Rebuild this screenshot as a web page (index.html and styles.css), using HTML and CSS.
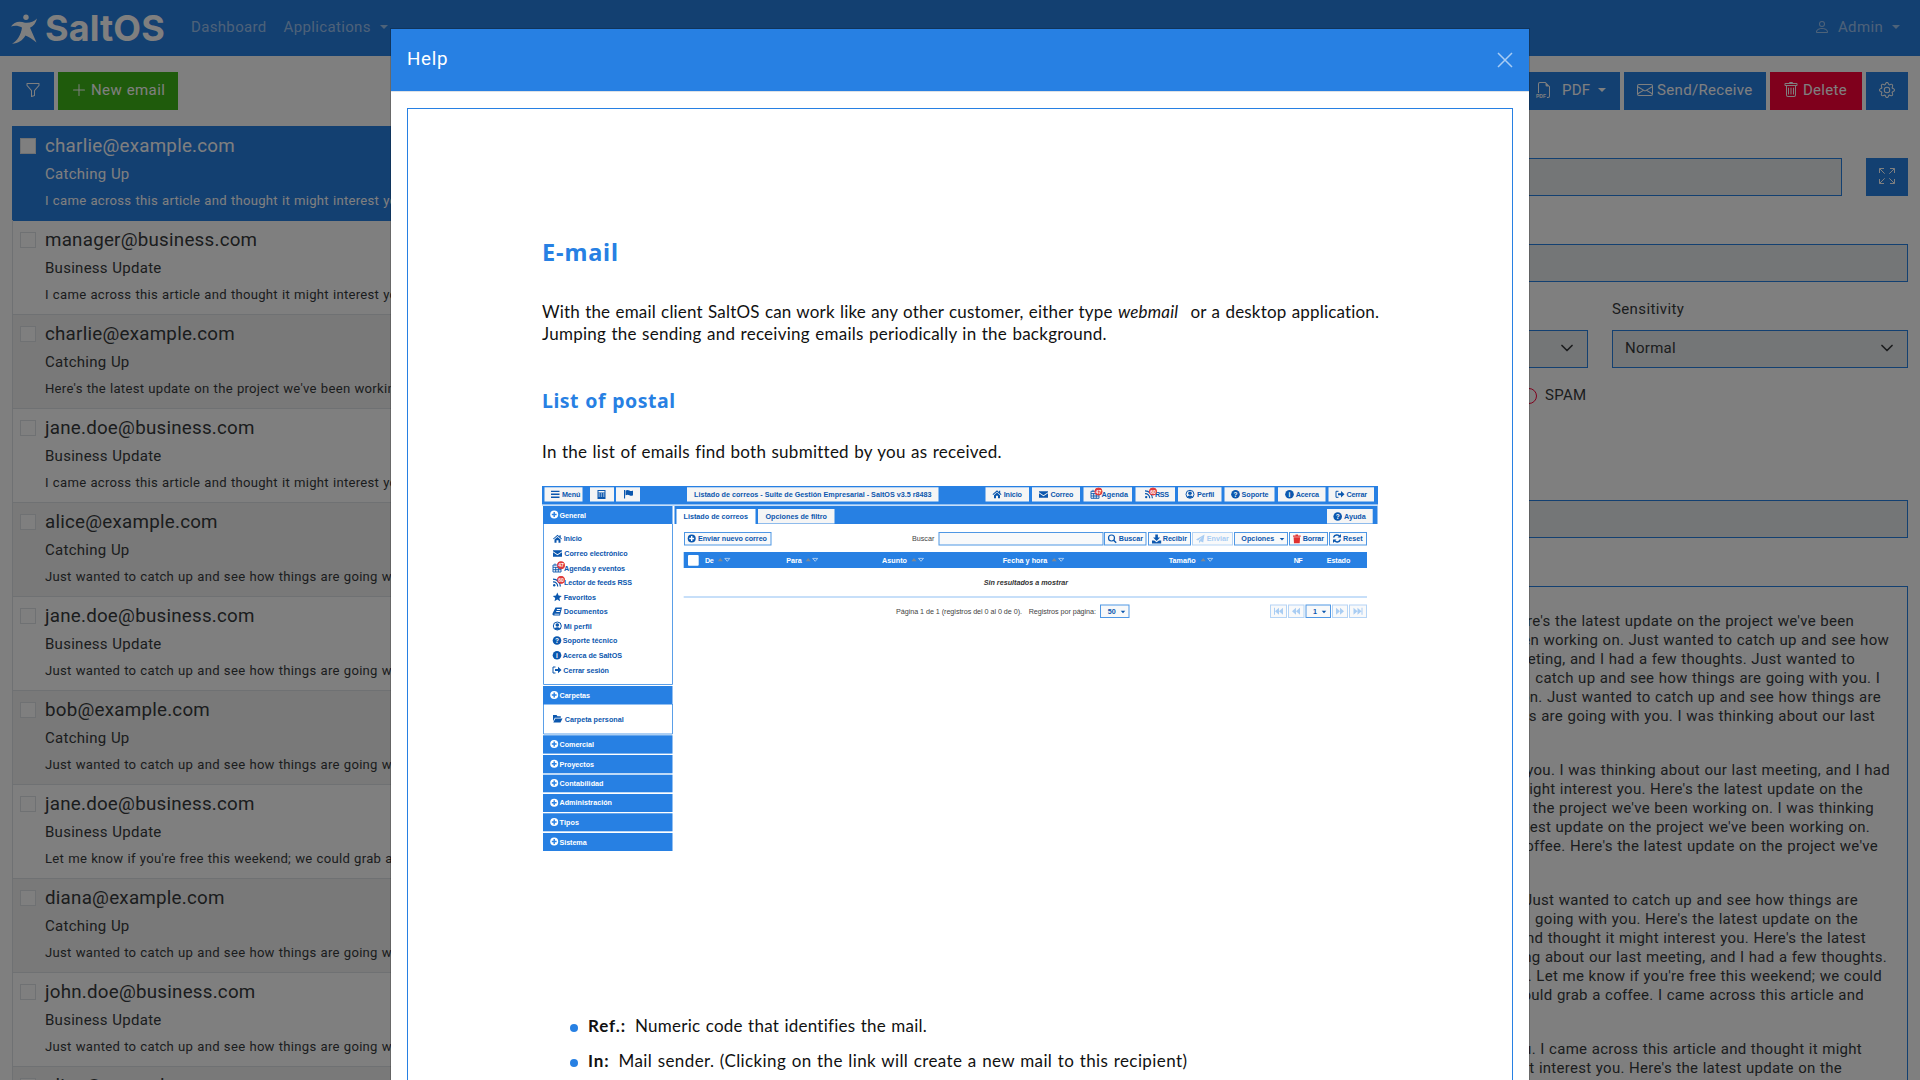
FILE: index.html
```html
<!DOCTYPE html>
<html lang="en">
<head>
<meta charset="utf-8">
<title>SaltOS</title>
<link rel="stylesheet" href="styles.css">
</head>
<body>
<nav class="navbar">
  <div class="brand">
    <svg class="brand-mark" width="28" height="32" viewBox="11 12 28 32"><circle cx="27" cy="16.3" r="2.7"/><path d="M12 25.5c3-4.600 8-6 14-3.700 5 .4 8.500-.8 12-4.300-1 4.500-3.500 7.500-7 9.300l6.500 14.700c-4-3.200-7.500-5.500-11-7-3 4.800-7 8-13.500 8.300 5.500-3.200 9-8.800 10-16.300-3.500-1.800-7-2.200-11-1z"/></svg>
    <span class="brand-name">SaltOS</span>
  </div>
  <div class="nav-links">
    <a>Dashboard</a>
    <a>Applications<i class="caret"></i></a>
  </div>
  <div class="nav-user">
    <svg class="icon" viewBox="0 0 16 16"><path d="M8 8a3 3 0 1 0 0-6 3 3 0 0 0 0 6m2-3a2 2 0 1 1-4 0 2 2 0 0 1 4 0m4 8c0 1-1 1-1 1H3s-1 0-1-1 1-4 6-4 6 3 6 4m-1-.004c-.001-.246-.154-.986-.832-1.664C11.516 10.680 10.289 10 8 10s-3.516.68-4.168 1.332c-.678.678-.83 1.418-.832 1.664z"/></svg>
    <span>Admin</span><i class="caret"></i>
  </div>
</nav>

<main class="layout">
  <section class="list-pane">
    <div class="toolbar">
      <button class="btn btn-icon"><svg class="icon" viewBox="0 0 16 16"><path d="M1.500 1.500A.5.5 0 0 1 2 1h12a.5.5 0 0 1 .5.5v2a.5.5 0 0 1-.128.334L10 8.692V13.500a.5.5 0 0 1-.342.474l-3 1A.5.5 0 0 1 6 14.500V8.692L1.628 3.834A.5.5 0 0 1 1.500 3.500zm1 .5v1.308l4.372 4.858A.5.5 0 0 1 7 8.500v5.306l2-.666V8.500a.5.5 0 0 1 .128-.334L13.500 3.308V2z"/></svg></button>
      <button class="btn btn-success"><svg class="icon" viewBox="0 0 16 16"><path d="M8 2a.5.5 0 0 1 .5.5v5h5a.5.5 0 0 1 0 1h-5v5a.5.5 0 0 1-1 0v-5h-5a.5.5 0 0 1 0-1h5v-5A.5.5 0 0 1 8 2"/></svg>New email</button>
    </div>
    <ul class="mails">
      <li class="mail active"><i class="check"></i><div><h5>charlie@example.com</h5><p>Catching Up</p><small>I came across this article and thought it might interest you.</small></div></li>
      <li class="mail"><i class="check"></i><div><h5>manager@business.com</h5><p>Business Update</p><small>I came across this article and thought it might interest you.</small></div></li>
      <li class="mail"><i class="check"></i><div><h5>charlie@example.com</h5><p>Catching Up</p><small>Here's the latest update on the project we've been working on.</small></div></li>
      <li class="mail"><i class="check"></i><div><h5>jane.doe@business.com</h5><p>Business Update</p><small>I came across this article and thought it might interest you.</small></div></li>
      <li class="mail"><i class="check"></i><div><h5>alice@example.com</h5><p>Catching Up</p><small>Just wanted to catch up and see how things are going with you.</small></div></li>
      <li class="mail"><i class="check"></i><div><h5>jane.doe@business.com</h5><p>Business Update</p><small>Just wanted to catch up and see how things are going with you.</small></div></li>
      <li class="mail"><i class="check"></i><div><h5>bob@example.com</h5><p>Catching Up</p><small>Just wanted to catch up and see how things are going with you.</small></div></li>
      <li class="mail"><i class="check"></i><div><h5>jane.doe@business.com</h5><p>Business Update</p><small>Let me know if you're free this weekend; we could grab a coffee.</small></div></li>
      <li class="mail"><i class="check"></i><div><h5>diana@example.com</h5><p>Catching Up</p><small>Just wanted to catch up and see how things are going with you.</small></div></li>
      <li class="mail"><i class="check"></i><div><h5>john.doe@business.com</h5><p>Business Update</p><small>Just wanted to catch up and see how things are going with you.</small></div></li>
      <li class="mail"><i class="check"></i><div><h5>alice@example.com</h5></div></li>
    </ul>
  </section>

  <section class="detail-pane">
    <div class="toolbar toolbar-end">
      <button class="btn btn-pdf"><svg class="icon" viewBox="0 0 16 16"><path d="M14 4.500V14a2 2 0 0 1-2 2h-1v-1h1a1 1 0 0 0 1-1V4.500h-2A1.500 1.500 0 0 1 9.500 3V1H4a1 1 0 0 0-1 1v9H2V2a2 2 0 0 1 2-2h5.500z"/><text class="pdf-tag" x="0" y="16" textLength="10" lengthAdjust="spacingAndGlyphs">PDF</text></svg><span>PDF</span><i class="caret"></i></button>
      <button class="btn btn-send"><svg class="icon" viewBox="0 0 16 16"><path d="M0 4a2 2 0 0 1 2-2h12a2 2 0 0 1 2 2v8a2 2 0 0 1-2 2H2a2 2 0 0 1-2-2zm2-1a1 1 0 0 0-1 1v.217l7 4.200 7-4.200V4a1 1 0 0 0-1-1zm13 2.383-4.708 2.825L15 11.105zm-.034 6.876-5.640-3.471L8 9.583l-1.326-.795-5.640 3.470A1 1 0 0 0 2 13h12a1 1 0 0 0 .966-.741M1 11.105l4.708-2.897L1 5.383z"/></svg>Send/Receive</button>
      <button class="btn btn-danger"><svg class="icon" viewBox="0 0 16 16"><path d="M5.500 5.500A.5.5 0 0 1 6 6v6a.5.5 0 0 1-1 0V6a.5.5 0 0 1 .5-.5m2.500 0a.5.5 0 0 1 .5.5v6a.5.5 0 0 1-1 0V6a.5.5 0 0 1 .5-.5m3 .5a.5.5 0 0 0-1 0v6a.5.5 0 0 0 1 0z"/><path d="M14.500 3a1 1 0 0 1-1 1H13v9a2 2 0 0 1-2 2H5a2 2 0 0 1-2-2V4h-.5a1 1 0 0 1-1-1V2a1 1 0 0 1 1-1H6a1 1 0 0 1 1-1h2a1 1 0 0 1 1 1h3.500a1 1 0 0 1 1 1zM4.118 4 4 4.059V13a1 1 0 0 0 1 1h6a1 1 0 0 0 1-1V4.059L11.882 4zM2.500 3h11V2h-11z"/></svg>Delete</button>
      <button class="btn btn-icon"><svg class="icon" viewBox="0 0 16 16"><path d="M8 4.754a3.246 3.246 0 1 0 0 6.492 3.246 3.246 0 0 0 0-6.492M5.754 8a2.246 2.246 0 1 1 4.492 0 2.246 2.246 0 0 1-4.492 0"/><path d="M9.796 1.343c-.527-1.790-3.065-1.790-3.592 0l-.094.319a.873.873 0 0 1-1.255.52l-.292-.16c-1.640-.892-3.433.902-2.540 2.541l.159.292a.873.873 0 0 1-.52 1.255l-.319.094c-1.790.527-1.790 3.065 0 3.592l.319.094a.873.873 0 0 1 .52 1.255l-.16.292c-.892 1.640.901 3.434 2.541 2.540l.292-.159a.873.873 0 0 1 1.255.52l.094.319c.527 1.790 3.065 1.790 3.592 0l.094-.319a.873.873 0 0 1 1.255-.52l.292.16c1.640.893 3.434-.902 2.540-2.541l-.159-.292a.873.873 0 0 1 .52-1.255l.319-.094c1.790-.527 1.790-3.065 0-3.592l-.319-.094a.873.873 0 0 1-.52-1.255l.16-.292c.893-1.640-.902-3.433-2.541-2.540l-.292.159a.873.873 0 0 1-1.255-.52zm-2.633.283c.246-.835 1.428-.835 1.674 0l.094.319a1.873 1.873 0 0 0 2.693 1.115l.291-.16c.764-.415 1.600.42 1.184 1.185l-.159.292a1.873 1.873 0 0 0 1.116 2.692l.318.094c.835.246.835 1.428 0 1.674l-.319.094a1.873 1.873 0 0 0-1.115 2.693l.16.291c.415.764-.42 1.600-1.185 1.184l-.291-.159a1.873 1.873 0 0 0-2.693 1.116l-.094.318c-.246.835-1.428.835-1.674 0l-.094-.319a1.873 1.873 0 0 0-2.692-1.115l-.292.16c-.764.415-1.600-.42-1.184-1.185l.159-.291A1.873 1.873 0 0 0 1.945 8.930l-.319-.094c-.835-.246-.835-1.428 0-1.674l.319-.094A1.873 1.873 0 0 0 3.060 4.377l-.16-.292c-.415-.764.42-1.600 1.185-1.184l.292.159a1.873 1.873 0 0 0 2.692-1.115z"/></svg></button>
    </div>
    <div class="field-row">
      <div class="input"></div>
      <button class="btn btn-icon"><svg class="icon icon-line" viewBox="0 0 16 16"><path d="M.5 5V.5H5M.7.7l5 5M11 .5h4.500V5M15.300.7l-5 5M.5 11v4.500H5M.7 15.300l5-5M15.500 11v4.500H11M15.300 15.300l-5-5"/></svg></button>
    </div>
    <div class="input input-gap"></div>
    <div class="select-row">
      <div></div><div></div>
      <div class="select"><svg width="16" height="16" viewBox="0 0 16 16"><path d="m2 5 6 6 6-6"/></svg></div>
      <div class="sensitivity"><label>Sensitivity</label><div class="select"><span>Normal</span><svg width="16" height="16" viewBox="0 0 16 16"><path d="m2 5 6 6 6-6"/></svg></div></div>
    </div>
    <div class="spam"><i class="radio"></i>SPAM</div>
    <div class="input input-attach"></div>
    <div class="message">
      <p>
        <span style="--end:54px">I came across this article and thought it might interest you. Here's the latest update on the project we've been</span>
        <span style="--end:19px">Here's the latest update on the project we've been working on. Just wanted to catch up and see how</span>
        <span style="--end:53px">I was thinking about our last meeting, and I had a few thoughts. Just wanted to</span>
        <span style="--end:28px">catch up and see how things are going with you. I</span>
        <span style="--end:27px">Here's the latest update on the project we've been working on. Just wanted to catch up and see how things are</span>
        <span style="--end:33px">Just wanted to catch up and see how things are going with you. I was thinking about our last</span>
      </p>
      <p>
        <span style="--end:18px">Just wanted to catch up and see how things are going with you. I was thinking about our last meeting, and I had</span>
        <span style="--end:45px">I came across this article and thought it might interest you. Here's the latest update on the</span>
        <span style="--end:34px">the project we've been working on. I was thinking</span>
        <span style="--end:38px">Here's the latest update on the project we've been working on.</span>
        <span style="--end:30px">we could grab a coffee. Here's the latest update on the project we've</span>
      </p>
      <p>
        <span style="--end:50px">Just wanted to catch up and see how things are</span>
        <span style="--end:50px">going with you. Here's the latest update on the</span>
        <span style="--end:42px">I came across this article and thought it might interest you. Here's the latest</span>
        <span style="--end:21px">I was thinking about our last meeting, and I had a few thoughts.</span>
        <span style="--end:26px">with you. Let me know if you're free this weekend; we could</span>
        <span style="--end:44px">we could grab a coffee. I came across this article and</span>
      </p>
      <p>
        <span style="--end:46px">with you. I came across this article and thought it might</span>
        <span style="--end:66px">thought it might interest you. Here's the latest update on the</span>
      </p>
    </div>
  </section>
</main>

<div class="backdrop"></div>

<div class="modal">
  <header class="modal-header">
    <h5>Help</h5>
    <svg width="16" height="16" viewBox="0 0 16 16"><path d="m1 1 14 14M15 1 1 15"/></svg>
  </header>
  <div class="modal-body">
    <article class="page">
      <h1>E-mail</h1>
      <p><span class="l1">With the email client SaltOS can work like any other customer, either type <em>webmail</em> <span class="tail">or a desktop application.</span></span><span class="l2">Jumping the sending and receiving emails periodically in the background.</span></p>
      <h2>List of postal</h2>
      <p class="intro">In the list of emails find both submitted by you as received.</p>

      <svg class="shot" width="836" height="365" viewBox="542 486 836 365">
        <defs>
          <g id="home"><path d="M-4.500 0 0-4l4.500 4-.7.600L0-2.600-3.800.6zM-3 .9 0-1.700 3 .9V4H1V1.500h-2V4h-2zM2-3.500h1.200V-1L2-2z"/></g>
          <g id="mail"><path d="M-4.500-3h9v1L0 1-4.500-2zM-4.500-1 0 2l4.500-3v4.500h-9z"/></g>
          <g id="cal"><path fill="none" stroke="#0b57ae" stroke-width=".9" d="M-4-3h8v7h-8zM-4-.7h8M-4 1.700h8M-1.300-1v5M1.300-1v5M-2-4.500v2M2-4.500v2"/></g>
          <g id="rss"><circle cx="-2.800" cy="2.800" r="1.200"/><path fill="none" stroke="#0b57ae" stroke-width="1.200" d="M-4-.7A4.500 4.500 0 0 1 .7 4M-4-3.400A7.400 7.400 0 0 1 3.400 4"/></g>
          <g id="user"><circle r="4" fill="none" stroke="#0b57ae"/><circle cy="-1" r="1.800"/><path d="M-3 2.500Q0 0 3 2.500 0 5-3 2.500"/></g>
          <g id="help"><circle r="4.300"/><text class="g" x="-1.900" y="2.400">?</text></g>
          <g id="info"><circle r="4.300"/><text class="g" x="-1" y="2.400">i</text></g>
          <g id="exit"><path fill="none" stroke="#0b57ae" d="M-1.500-3h-2.500v6h2.500"/><path d="M-2-1h3v-2.200L4.500 0 1 3.200V1h-3z"/></g>
          <g id="plus"><circle r="4"/><path class="cut" d="M-2.400 0h4.800M0-2.400v4.800"/></g>
          <g id="sort"><path fill="#7f8894" d="M-6 1.300h5L-3.500-2z"/><path fill="none" stroke="#dbe8f6" stroke-width=".7" d="M1-1.600h5L3.500 1.300z"/></g>
          <g id="caret"><path d="M-2.300-1h4.600L0 1.500z"/></g>
        </defs>
        <rect class="blue" x="542" y="486" width="836" height="18.500"/>
        <path class="rule" d="M542 505h836"/>
        <g class="chip">
          <rect x="544.500" y="487.300" width="38" height="14.200"/><rect x="590" y="487.300" width="24" height="14.200"/><rect x="616" y="487.300" width="24" height="14.200"/>
          <rect x="687" y="487.300" width="251.500" height="14.200"/>
          <rect x="985.500" y="487.300" width="43.500" height="14.200"/><rect x="1032" y="487.300" width="48" height="14.200"/><rect x="1083.500" y="487.300" width="48.500" height="14.200"/><rect x="1135.500" y="487.300" width="39.500" height="14.200"/><rect x="1178" y="487.300" width="43.500" height="14.200"/><rect x="1224.500" y="487.300" width="50" height="14.200"/><rect x="1278" y="487.300" width="47.500" height="14.200"/><rect x="1328.500" y="487.300" width="45.500" height="14.200"/>
        </g>
        <g class="ink">
          <path d="M551 490.700h8.500v1.400H551zm0 2.900h8.500v1.400H551zm0 2.900h8.500v1.400H551z"/>
          <path fill-rule="evenodd" d="M597.500 490h8v9h-8zm1 1v1.600h6V491zm0 2.500v1h1.300v-1zm2.300 0v1h1.300v-1zm2.300 0v1h1.300v-1zm-4.600 2v1h1.300v-1zm2.300 0v1h1.300v-1zm2.300 0v1h1.300v-1z"/>
          <path d="M624 490h1.100v8.500H624zm1.600.6q2-1 3.800 0t3.600 0v4.600q-1.800 1-3.600 0t-3.800 0z"/>
          <use href="#home" x="997" y="494.300"/><use href="#mail" x="1043.500" y="494.300"/><use href="#cal" x="1095" y="494.300"/><use href="#rss" x="1149" y="494.300"/><use href="#user" x="1190" y="494.300"/><use href="#help" x="1235.500" y="494.300"/><use href="#info" x="1289.500" y="494.300"/><use href="#exit" x="1340" y="494.300"/>
        </g>
        <g class="badge"><circle cx="1098.500" cy="491.500" r="3.800"/><text x="1095.700" y="493.500">47</text><circle cx="1153" cy="491.500" r="3.800"/><text x="1150.200" y="493.500">60</text></g>
        <g class="ink">
          <text x="562" y="497" textLength="18.300">Menú</text><text x="694" y="497" textLength="237.500">Listado de correos - Suite de Gestión Empresarial - SaltOS v3.5 r8483</text>
          <text x="1003.700" y="497" textLength="18.300">Inicio</text><text x="1050.500" y="497" textLength="23">Correo</text><text x="1101.500" y="497" textLength="26.500">Agenda</text><text x="1155" y="497" textLength="14">RSS</text><text x="1197" y="497" textLength="17.300">Perfil</text><text x="1241.500" y="497" textLength="27">Soporte</text><text x="1295.700" y="497" textLength="23.300">Acerca</text><text x="1346.500" y="497" textLength="20.500">Cerrar</text>
        </g>

        <rect class="blue" x="543" y="506" width="129.500" height="18"/>
        <path class="frame" d="M543.500 524v160.500h129V524M543.500 704v30h129v-30"/>
        <g class="blue"><rect x="543" y="686" width="129.500" height="18.500"/><rect x="543" y="735.300" width="129.500" height="18.300"/><rect x="543" y="755" width="129.500" height="18.300"/><rect x="543" y="774.700" width="129.500" height="17.600"/><rect x="543" y="794" width="129.500" height="18"/><rect x="543" y="813.300" width="129.500" height="18"/><rect x="543" y="833" width="129.500" height="18"/></g>
        <g class="white">
          <use href="#plus" x="554.200" y="514.500"/><use href="#plus" x="554.200" y="695"/><use href="#plus" x="554.200" y="744"/><use href="#plus" x="554.200" y="763.700"/><use href="#plus" x="554.200" y="783"/><use href="#plus" x="554.200" y="802.700"/><use href="#plus" x="554.200" y="822"/><use href="#plus" x="554.200" y="841.500"/>
          <text x="559.500" y="517.600" textLength="26.500">General</text><text x="559.500" y="698" textLength="30.500">Carpetas</text><text x="559.500" y="747" textLength="34.500">Comercial</text><text x="559.500" y="766.700" textLength="34.500">Proyectos</text><text x="559.500" y="785.700" textLength="44">Contabilidad</text><text x="559.500" y="805.300" textLength="52.500">Administración</text><text x="559.500" y="825" textLength="19.500">Tipos</text><text x="559.500" y="844.500" textLength="27.200">Sistema</text>
        </g>
        <g class="badge"><circle cx="561" cy="565.500" r="3.800"/><text x="558.200" y="567.500">47</text><circle cx="561" cy="580" r="3.800"/><text x="558.200" y="582">60</text></g>
        <g class="ink">
          <use href="#home" x="557.500" y="538.700"/><use href="#mail" x="557.500" y="553.300"/><use href="#cal" x="557" y="568"/><use href="#rss" x="557" y="582.500"/>
          <path d="m557.300 592.600 1.300 3 3.200.3-2.400 2.100.7 3.200-2.800-1.700-2.800 1.700.7-3.200-2.400-2.100 3.200-.3z"/>
          <path fill-rule="evenodd" d="M555.500 607.500h6.500l-2 8h-6.500q-1.500-.5-1-2zm1.500 1.500-.3 1h3.600l.3-1zm-.6 2-.3 1h3.600l.3-1zm-1.900 2.700v.8h4.800l.2-.8z"/>
          <use href="#user" x="557.300" y="626"/><use href="#help" x="557" y="640.500"/><use href="#info" x="557" y="655.300"/><use href="#exit" x="557" y="670"/>
          <path d="M553 715h3.500l1 1.200h3.300v1.600h-6l-1.800 3.500zM555.300 718.600h7.200l-2 4h-7.200z"/>
          <text x="563.700" y="541.200" textLength="18.300">Inicio</text><text x="564.300" y="555.900" textLength="63.400">Correo electrónico</text><text x="564" y="571" textLength="61">Agenda y eventos</text><text x="564" y="585.300" textLength="68">Lector de feeds RSS</text><text x="563.700" y="599.600" textLength="32.300">Favoritos</text><text x="563.700" y="614.200" textLength="44">Documentos</text><text x="563.700" y="628.800" textLength="28">Mi perfil</text><text x="562.700" y="643.300" textLength="54.600">Soporte técnico</text><text x="562.700" y="658" textLength="59.300">Acerca de SaltOS</text><text x="563.300" y="672.600" textLength="45.700">Cerrar sesión</text><text x="564.700" y="721.700" textLength="59">Carpeta personal</text>
        </g>
        <g class="badge"><circle cx="561" cy="565" r="3.800"/><text x="558.200" y="567">47</text><circle cx="561" cy="579.700" r="3.800"/><text x="558.200" y="581.700">60</text><circle cx="1098.500" cy="491.500" r="3.800"/><text x="1095.700" y="493.500">47</text><circle cx="1153" cy="491.500" r="3.800"/><text x="1150.200" y="493.500">60</text></g>

        <rect class="blue" x="674.500" y="506" width="703" height="18"/>
        <rect fill="#fff" x="676.500" y="509" width="79" height="15.500"/><g class="chip"><rect x="758" y="509" width="76.500" height="14.500"/><rect x="1327" y="509" width="45.700" height="14.500"/></g>
        <g class="ink"><text x="683.500" y="519.300" textLength="64.500">Listado de correos</text><text x="765.500" y="519.300" textLength="61.500">Opciones de filtro</text><use href="#help" x="1337.700" y="516.500"/><text x="1344" y="519.300" textLength="21.700">Ayuda</text></g>

        <g class="box"><rect x="684.500" y="532.500" width="86.500" height="12.500"/><rect x="939" y="532.500" width="164" height="12.500"/><rect x="1104.500" y="532.500" width="41.500" height="12.500"/><rect x="1148.500" y="532.500" width="42" height="12.500"/><rect x="1234.500" y="532.500" width="53" height="12.500"/><rect x="1289.500" y="532.500" width="38" height="12.500"/><rect x="1329.500" y="532.500" width="37" height="12.500"/><rect x="1100.500" y="605" width="28.500" height="12.500"/><rect x="1306" y="605" width="24.500" height="12.500"/></g>
        <g class="box off"><rect x="1192.500" y="532.500" width="40" height="12.500"/><rect x="1270.500" y="605" width="16" height="12.500"/><rect x="1288.500" y="605" width="15.500" height="12.500"/><rect x="1332.500" y="605" width="15" height="12.500"/><rect x="1349.500" y="605" width="17" height="12.500"/></g>
        <g class="ink">
          <circle cx="691.700" cy="538.500" r="4"/><path stroke="#fff" stroke-width="1.400" d="M689.300 538.500h4.800M691.700 536.100v4.800"/><text x="698" y="541.200" textLength="69">Enviar nuevo correo</text>
          <circle cx="1111.500" cy="538" r="3" fill="none" stroke="#0b57ae" stroke-width="1.200"/><path stroke="#0b57ae" stroke-width="1.400" d="m1113.700 540.200 2.500 2.500"/><text x="1118.700" y="541.200" textLength="24.300">Buscar</text>
          <path d="M1155.300 534.500h2.600v3h2.200l-3.500 3.500-3.500-3.500h2.200zM1152 540.500h2.200l2.400 1.800 2.400-1.800h2.200v3h-9.200z"/><text x="1162.700" y="541.200" textLength="24.300">Recibir</text>
          <text x="1241.300" y="541.200" textLength="33">Opciones</text><use href="#caret" x="1282" y="539"/>
          <path fill="#e03030" d="M1293 535.500h2.500v-1h2.500v1h2.700v1.300h-7.700zM1293.600 537.300h6.500l-.4 6h-5.700z"/><text x="1302.700" y="541.200" textLength="21.300">Borrar</text>
          <path fill="none" stroke="#0b57ae" stroke-width="1.400" d="M1333.500 537.500a3.600 3.600 0 0 1 6.500-.7M1340.500 539.500a3.600 3.600 0 0 1-6.500.7"/><path d="M1341 534v3.500h-3.500zM1333 543v-3.500h3.500z"/><text x="1343" y="541.200" textLength="19.700">Reset</text>
          <text x="1107.700" y="613.500" textLength="8">50</text><use href="#caret" x="1123" y="611.800"/><text x="1313" y="613.500">1</text><use href="#caret" x="1324" y="611.800"/>
        </g>
        <g class="faint">
          <path d="m1196 539.500 8.500-5-1.300 8-2.700-1.200-1.500 2v-2.600l3.500-4-4.500 3.800z"/><text x="1206.700" y="541.200" textLength="22">Enviar</text>
          <path d="M1274 607.700h1v7h-1zM1279 607.700v7l-4-3.500zM1283 607.700v7l-4-3.500zM1296 607.700v7l-4-3.500zM1300 607.700v7l-4-3.500zM1336 607.700v7l4-3.500zM1340 607.700v7l4-3.500zM1353.500 607.700v7l4-3.500zM1357.500 607.700v7l4-3.500zM1361.500 607.700h1v7h-1z"/>
        </g>
        <text class="plain" x="912" y="541.200" textLength="22.300">Buscar</text>

        <rect class="blue" x="683.700" y="552" width="683.300" height="16"/><rect fill="#fff" x="688" y="555" width="10.700" height="10.700" rx="1"/>
        <g class="white">
          <text x="705" y="562.800" textLength="8.700">De</text><text x="786.300" y="562.800" textLength="15.400">Para</text><text x="882" y="562.800" textLength="25">Asunto</text><text x="1002.700" y="562.800" textLength="44.600">Fecha y hora</text><text x="1168.700" y="562.800" textLength="27">Tamaño</text><text x="1293.700" y="562.800" textLength="9">NF</text><text x="1326.700" y="562.800" textLength="23.600">Estado</text>
          <use href="#sort" x="723.800" y="560"/><use href="#sort" x="811.700" y="560"/><use href="#sort" x="917.500" y="560"/><use href="#sort" x="1057.700" y="560"/><use href="#sort" x="1206.700" y="560"/>
        </g>
        <text class="none" x="983.700" y="585.300" textLength="84.300">Sin resultados a mostrar</text>
        <path class="rule" d="M683.700 597H1367"/>
        <text class="plain" x="896" y="614" textLength="126">Página 1 de 1 (registros del 0 al 0 de 0).</text><text class="plain" x="1028.700" y="614" textLength="67.300">Registros por página:</text>
      </svg>

      <ul class="terms">
        <li><b>Ref.:</b><span class="t1">Numeric code that identifies the mail.</span></li>
        <li><b>In:</b><span class="t2">Mail sender. (Clicking on the link will create a new mail to this recipient)</span></li>
      </ul>
    </article>
  </div>
</div>
</body>
</html>
```
FILE: styles.css
```css
* { box-sizing: border-box; }

html, body { height: 1080px; overflow: hidden; }

body {
  margin: 0;
  background: #fff;
  color: #373a3c;
  font: 15px/24px Roboto, "Liberation Sans", sans-serif;
  letter-spacing: .27px;
  word-spacing: .43px;
}

h1, h2, h5, p, ul { margin: 0; padding: 0; }
h5 { font-weight: 400; }

.icon { width: 16px; height: 16px; fill: currentColor; flex: none; overflow: visible; }
.icon-line { fill: none; stroke: currentColor; }

.caret {
  width: 0;
  height: 0;
  margin-left: 9px;
  border: 4.500px solid transparent;
  border-top-color: currentColor;
  border-bottom: 0;
}

/* Navigation */
.navbar {
  display: flex;
  align-items: center;
  height: 56px;
  padding: 0 20px 3px 10px;
  background: #2780e3;
  color: rgba(255, 255, 255, .55);
}
.brand { display: flex; align-items: center; height: 44px; color: #fff; }
.brand-mark { fill: currentColor; margin-top: 4px; }
.brand-name {
  margin: 3px 0 0 7px;
  width: 120px;
  font: 700 36px/40px Inter, sans-serif;
  letter-spacing: .1px;
}
.nav-links { display: flex; gap: 17px; margin-left: 26px; letter-spacing: .34px; }
.nav-links a, .nav-user { display: flex; align-items: center; }
.nav-user { margin-left: auto; }
.nav-user span { margin-left: 8px; letter-spacing: .34px; }

/* Buttons */
.toolbar { display: flex; gap: 4px; height: 38px; }
.toolbar-end { justify-content: flex-end; }
.btn {
  display: flex;
  align-items: center;
  gap: 5px;
  height: 38px;
  padding: 0 13px 3px;
  border: 0;
  background: #2780e3;
  color: #fff;
  font: inherit;
  letter-spacing: inherit;
  word-spacing: inherit;
  white-space: nowrap;
}
.btn-icon { width: 42px; flex: none; }
.btn-success { width: 120px; gap: 4px; background: #3fb618; letter-spacing: .4px; }
.btn-danger { width: 92px; gap: 4px; background: #ff0039; }
.btn-send { width: 142px; gap: 4px; letter-spacing: .34px; }
.btn-pdf { width: 97px; }
.btn-pdf span { margin-left: 5px; }
.btn-pdf .caret { margin-left: 3px; }
.pdf-tag { font: 700 5.500px "Liberation Sans", sans-serif; letter-spacing: 0; }

/* Two-pane layout */
.layout {
  display: grid;
  grid-template-columns: 616px 1256px;
  gap: 24px;
  height: 1024px;
  padding: 16px 12px 0;
  overflow: hidden;
}

.mails { margin-top: 16px; list-style: none; border: 1px solid #dee2e6; }
.mail {
  display: flex;
  height: 94px;
  padding: 7px 7px 0;
  border-bottom: 1px solid #dee2e6;
}
.mail:nth-child(odd) { background: #f2f2f2; }
.mail.active { background: #2780e3; color: #fff; border-color: #2780e3; box-shadow: -1px -1px #2780e3, 1px -1px #2780e3; }
.check { width: 16px; height: 16px; margin: 4px 9px 0 0; background: #fff; border: 1px solid #dee2e6; flex: none; }
.mail h5 { font-size: 18.750px; line-height: 24px; letter-spacing: .24px; }
.mail p { margin-top: 4px; }
.mail small {
  display: block;
  margin-top: 4px;
  font-size: 13.100px;
  line-height: 21px;
  letter-spacing: .28px;
  word-spacing: .5px;
  white-space: nowrap;
}

/* Form */
.input, .select { height: 38px; background: #e9ecef; border: 1px solid #2780e3; }
.field-row { display: flex; gap: 24px; margin-top: 48px; }
.field-row .input { flex: 1; }
.input-gap { margin-top: 48px; }
.select-row {
  display: grid;
  grid-template-columns: repeat(4, 296px);
  gap: 24px;
  align-items: end;
  margin-top: 16px;
}
.sensitivity label { display: block; height: 32px; line-height: 23px; letter-spacing: .38px; }
.select { display: flex; align-items: center; padding: 0 12px 2px 12px; }
.select svg { margin-left: auto; fill: none; stroke: #373a3c; stroke-width: 2; stroke-linecap: round; stroke-linejoin: round; transform: scale(.84); }
.spam { display: flex; align-items: center; gap: 8px; margin: 16px 0 0 869px; line-height: 22px; }
.radio { width: 16px; height: 16px; margin-top: 2px; border: 1px solid #ff0039; border-radius: 50%; }
.input-attach { margin-top: 94px; }
.message {
  height: 700px;
  margin-top: 48px;
  padding-top: 25px;
  border: 1px solid #2780e3;
  overflow: hidden;
  line-height: 19px;
}
.message p { margin-bottom: 35px; }
.message span { display: block; padding-right: calc(var(--end) - 1px); text-align: right; white-space: nowrap; }

/* Help dialog */
.backdrop { position: fixed; inset: 0; background: rgba(0, 0, 0, .5); }
.modal {
  position: fixed;
  top: 28px;
  bottom: 0;
  left: 390px;
  width: 1140px;
  overflow: hidden;
  background: #fff;
  background-clip: padding-box;
  border: 1px solid rgba(0, 0, 0, .175);
  border-bottom: 0;
}
.modal-header {
  display: flex;
  align-items: center;
  justify-content: space-between;
  height: 63px;
  padding: 0 16px 3px;
  background: #2780e3;
  border-bottom: 1px solid #dee2e6;
  color: #fff;
}
.modal-header h5 { font-size: 18.750px; letter-spacing: .7px; }
.modal-header svg { fill: none; stroke: #fff; stroke-width: 1.500; opacity: .6; margin-top: 3px; }
.modal-body { height: 988px; padding: 16px 16px 0; }

.page {
  height: 100%;
  padding: 129px 134px 0;
  border: 1px solid #2780e3;
  border-bottom: 0;
  color: #111;
  font: 17px/22.300px Lato, sans-serif;
  letter-spacing: .18px;
  word-spacing: .7px;
  white-space: nowrap;
}
.page h1 { font: 700 23.500px/28px "Noto Sans", sans-serif; letter-spacing: .85px; color: #2780e3; }
.page h2 { margin-top: 43.600px; font: 700 19.500px/24px "Noto Sans", sans-serif; letter-spacing: .5px; color: #2780e3; }
.page p { margin-top: 35px; }
.page p.intro { margin-top: 28px; letter-spacing: .26px; }
.l1, .l2 { display: block; }
.l2 { letter-spacing: .26px; }
.tail { margin-left: 7px; }
.terms { margin-top: 164px; padding-left: 46px; list-style: none; }
.terms li { display: flex; align-items: center; height: 22.300px; margin-bottom: 12.700px; }
.terms li::before { content: ""; position: relative; left: -18px; width: 8px; height: 8px; margin: 3px -8px 0 0; border-radius: 50%; background: #2780e3; }
.terms b { letter-spacing: .9px; margin-right: 9px; }
.t1 { letter-spacing: .25px; }
.t2 { letter-spacing: .4px; }

/* Application screenshot inside the manual */
.shot { display: block; margin-top: 22.500px; word-spacing: 0; letter-spacing: 0; }
.shot text { font: 700 7.200px "Liberation Sans", sans-serif; }
.shot .blue { fill: #2780e3; }
.shot .chip { fill: #f5f5f5; }
.shot .ink { fill: #0b57ae; }
.shot .white { fill: #fff; }
.shot .faint { fill: #a9cdf3; }
.shot .box rect { fill: #f8f9fa; stroke: #4f97e4; }
.shot .box.off rect { stroke: #b5d4f5; }
.shot .rule { stroke: #8fbff3; }
.shot .frame { fill: none; stroke: #5a9fe8; }
.shot .badge { fill: #e03c3c; }
.shot .badge text { fill: #fff; font-size: 5px; }
.shot .g { fill: #fff; font-size: 6.500px; }
.shot .cut { stroke: #2780e3; stroke-width: 1.400; }
.shot .plain { font-weight: 400; fill: #444; }
.shot .none { font-style: italic; fill: #333; }
```
